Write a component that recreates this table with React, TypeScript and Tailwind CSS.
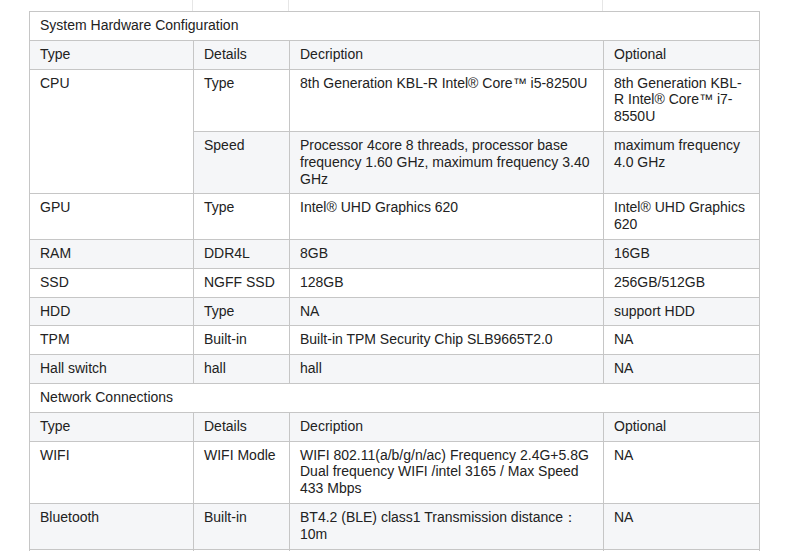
import React from "react";

type Row = { cells: { text: string; rowSpan?: number; colSpan?: number }[]; gray: boolean };

const rows: Row[] = [
  { gray: false, cells: [{ text: "System Hardware Configuration", colSpan: 4 }] },
  { gray: true, cells: [{ text: "Type" }, { text: "Details" }, { text: "Decription" }, { text: "Optional" }] },
  {
    gray: false,
    cells: [
      { text: "CPU", rowSpan: 2 },
      { text: "Type" },
      { text: "8th Generation KBL-R Intel® Core™ i5-8250U" },
      { text: "8th Generation KBL-R Intel® Core™ i7-8550U" },
    ],
  },
  {
    gray: true,
    cells: [
      { text: "Speed" },
      { text: "Processor 4core 8 threads, processor base frequency 1.60 GHz, maximum frequency 3.40 GHz" },
      { text: "maximum frequency 4.0 GHz" },
    ],
  },
  { gray: false, cells: [{ text: "GPU" }, { text: "Type" }, { text: "Intel® UHD Graphics 620" }, { text: "Intel® UHD Graphics 620" }] },
  { gray: true, cells: [{ text: "RAM" }, { text: "DDR4L" }, { text: "8GB" }, { text: "16GB" }] },
  { gray: false, cells: [{ text: "SSD" }, { text: "NGFF SSD" }, { text: "128GB" }, { text: "256GB/512GB" }] },
  { gray: true, cells: [{ text: "HDD" }, { text: "Type" }, { text: "NA" }, { text: "support HDD" }] },
  { gray: false, cells: [{ text: "TPM" }, { text: "Built-in" }, { text: "Built-in TPM Security Chip SLB9665T2.0" }, { text: "NA" }] },
  { gray: true, cells: [{ text: "Hall switch" }, { text: "hall" }, { text: "hall" }, { text: "NA" }] },
  { gray: false, cells: [{ text: "Network Connections", colSpan: 4 }] },
  { gray: true, cells: [{ text: "Type" }, { text: "Details" }, { text: "Decription" }, { text: "Optional" }] },
  {
    gray: false,
    cells: [
      { text: "WIFI" },
      { text: "WIFI Modle" },
      { text: "WIFI 802.11(a/b/g/n/ac) Frequency 2.4G+5.8G Dual frequency WIFI /intel 3165 / Max Speed 433 Mbps" },
      { text: "NA" },
    ],
  },
  {
    gray: true,
    cells: [
      { text: "Bluetooth" },
      { text: "Built-in" },
      { text: "BT4.2 (BLE) class1 Transmission distance：10m" },
      { text: "NA" },
    ],
  },
  { gray: false, cells: [{ text: "\u00a0" }, { text: "\u00a0" }, { text: "\u00a0" }, { text: "\u00a0" }] },
];

export default function App() {
  return (
    <div className="w-[790px] h-[560px] bg-white overflow-hidden">
      <div className="pl-[29px] w-[790px] h-[551px] overflow-hidden">
        <div className="flex h-[11px] w-[731px]">
          <div className="w-[164px] border-r border-[#e6e6e6]" />
          <div className="w-[96px] border-r border-[#e6e6e6]" />
          <div className="w-[314px] border-r border-[#e6e6e6]" />
          <div className="flex-1" />
        </div>
        <table
          className="w-[730px] table-fixed border-collapse text-[14px] leading-[16.8px] text-[#222]"
          style={{ fontFamily: '"Liberation Sans", Arial, sans-serif' }}
        >
          <colgroup>
            <col className="w-[164px]" />
            <col className="w-[96px]" />
            <col className="w-[314px]" />
            <col className="w-[156px]" />
          </colgroup>
          <tbody>
            {rows.map((r, i) => (
              <tr key={i} className={r.gray ? "bg-[#f5f6f8]" : "bg-white"}>
                {r.cells.map((c, j) => (
                  <td
                    key={j}
                    rowSpan={c.rowSpan}
                    colSpan={c.colSpan}
                    className={`border border-[#c6c6c6] align-top pl-[10px] pr-[10px] pt-[5px] pb-[6px] ${c.rowSpan ? "bg-white" : ""}`}
                  >
                    {c.text}
                  </td>
                ))}
              </tr>
            ))}
          </tbody>
        </table>
      </div>
    </div>
  );
}
